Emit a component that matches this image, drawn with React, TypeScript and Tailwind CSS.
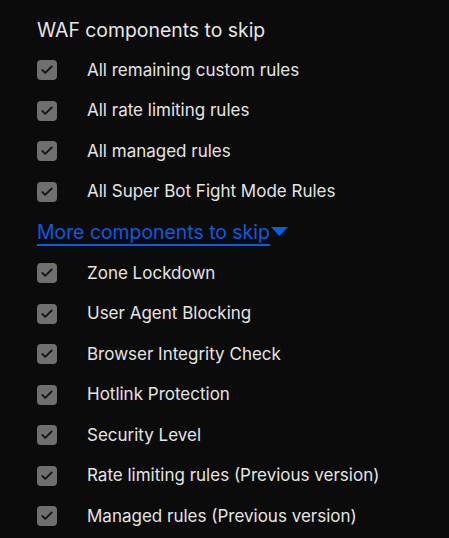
import { Check } from 'lucide-react';

const wafItems = [
  'All remaining custom rules',
  'All rate limiting rules',
  'All managed rules',
  'All Super Bot Fight Mode Rules',
];

const moreItems = [
  'Zone Lockdown',
  'User Agent Blocking',
  'Browser Integrity Check',
  'Hotlink Protection',
  'Security Level',
  'Rate limiting rules (Previous version)',
  'Managed rules (Previous version)',
];

function CheckRow({ label }: { label: string }) {
  return (
    <label className="flex items-center h-[40.5px]">
      <span className="w-5 h-5 rounded-[4px] bg-[#6f6f6f] flex items-center justify-center">
        <Check className="w-[14px] h-[14px] text-[#151515]" strokeWidth={3.2} />
      </span>
      <span className="ml-[30px] text-[17px] text-[#e4e4e4]">{label}</span>
    </label>
  );
}

export default function App() {
  return (
    <div
      className="w-[449px] h-[538px] bg-[#0b0b0b] pl-[37px] pt-[16px] overflow-hidden"
      style={{ fontFamily: 'Inter, "Noto Sans", sans-serif' }}
    >
      <h2 className="text-[19.4px] leading-[28px] text-[#e6e6e6] mb-[6px]">WAF components to skip</h2>
      <div className="flex flex-col">
        {wafItems.map(item => (
          <CheckRow key={item} label={item} />
        ))}
      </div>
      <button className="flex items-center h-[41px] text-[19.4px] text-[#0a5ce0]">
        <span className="border-b-2 border-[#0a5ce0] leading-[24px]">More components to skip</span>
        <svg width="17" height="10" viewBox="0 0 17 10" className="ml-[1px] mb-[2px]">
          <path d="M0 0 L17 0 L8.5 9 Z" fill="#0a5ce0" />
        </svg>
      </button>
      <div className="flex flex-col">
        {moreItems.map(item => (
          <CheckRow key={item} label={item} />
        ))}
      </div>
    </div>
  );
}
